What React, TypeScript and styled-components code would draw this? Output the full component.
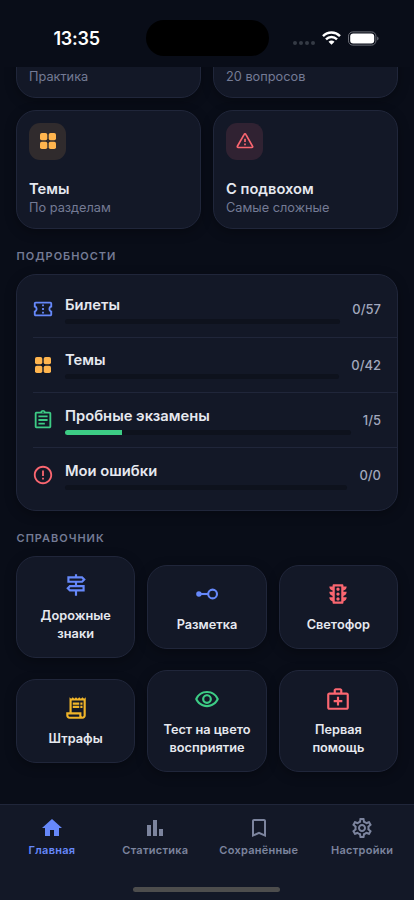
import React from "react";
import styled, { createGlobalStyle } from "styled-components";
import {
  MdOutlineConfirmationNumber,
  MdOutlineAssignment,
  MdErrorOutline,
  MdOutlineSignpost,
  MdOutlineTraffic,
  MdOutlineReceiptLong,
  MdOutlineRemoveRedEye,
  MdOutlineMedicalServices,
  MdHome,
  MdBarChart,
  MdBookmarkBorder,
  MdOutlineSettings,
} from "react-icons/md";

const c = {
  bg: "#090d18",
  card: "#131827",
  line: "#20263a",
  text: "#e6e8ef",
  muted: "#747b95",
  blue: "#6688fa",
  orange: "#ffb54e",
  amber: "#f0b429",
  green: "#3dcc85",
  red: "#fa6670",
};

const Global = createGlobalStyle`
  * { box-sizing: border-box; }
  body { margin: 0; background: ${c.bg}; font-family: Inter, "Noto Sans", sans-serif; color: ${c.text}; }
  svg { display: block; flex: none; }
`;

const Screen = styled.div`
  width: 414px;
  height: 900px;
  display: flex;
  flex-direction: column;
  overflow: hidden;
  background: ${c.bg};
`;

const StatusBar = styled.header`
  height: 67px;
  flex: none;
  display: grid;
  grid-template-columns: 145.5px 123px 1fr;
  align-items: center;
  padding-top: 9px;
`;

const Time = styled.div`
  padding: 2px 0 0 53.5px;
  font-size: 18px;
  line-height: 20px;
  font-weight: 600;
  color: #fff;
  letter-spacing: -0.25px;
`;

const Island = styled.div`
  height: 36px;
  border-radius: 18px;
  background: #000;
`;

const Signals = styled.div`
  display: flex;
  align-items: center;
  gap: 7px;
  padding-left: 24.5px;
`;

const Body = styled.main`
  flex: 1;
  min-height: 0;
  overflow: hidden;
  padding: 0 16px;
`;

const Modes = styled.section`
  display: grid;
  grid-template-columns: 1fr 1fr;
  gap: 12px;
  margin-top: -88.5px;
`;

const ModeCard = styled.article`
  height: 119px;
  padding: 12px;
  display: flex;
  flex-direction: column;
  background: ${c.card};
  border: 1px solid ${c.line};
  border-radius: 20px;
  box-shadow: 0 3px 12px rgba(0, 0, 0, 0.3);
`;

const Badge = styled.div<{ $bg: string; $color?: string }>`
  width: 37px;
  height: 37px;
  flex: none;
  border-radius: 11px;
  background: ${(p) => p.$bg};
  color: ${(p) => p.$color ?? "inherit"};
  display: grid;
  place-items: center;
  margin-bottom: 20px;
`;

const ModeTitle = styled.div`
  font-size: 14.7px;
  line-height: 19px;
  font-weight: 600;
`;

const ModeNote = styled.div`
  font-size: 12.75px;
  line-height: 18px;
  color: ${c.muted};
`;

const SectionLabel = styled.h2`
  margin: 19px 0 0;
  padding-left: 0.6px;
  height: 26px;
  line-height: 16px;
  font-size: 11px;
  font-weight: 600;
  letter-spacing: 0.98px;
  color: ${c.muted};
`;

const Details = styled.section`
  height: 237.2px;
  padding: 7.3px 0 8px 16px;
  background: ${c.card};
  border: 1px solid ${c.line};
  border-radius: 20px;
  box-shadow: 0 3px 12px rgba(0, 0, 0, 0.3);
`;

const DetailRow = styled.div`
  height: 55.1px;
  padding-right: 16px;
  display: flex;
  align-items: center;
  & + & {
    border-top: 1px solid ${c.line};
  }
`;

const DetailIcon = styled.div<{ $color: string }>`
  width: 20px;
  display: flex;
  justify-content: center;
  color: ${(p) => p.$color};
  margin-right: 12px;
`;

const DetailMain = styled.div`
  flex: 1;
  margin-right: 12px;
`;

const DetailTitle = styled.div`
  padding-top: 1px;
  font-size: 14.75px;
  line-height: 19px;
  font-weight: 600;
  margin-bottom: 4px;
`;

const Track = styled.div`
  height: 5px;
  border-radius: 3px;
  overflow: hidden;
  background: #0e121d;
`;

const Fill = styled.div`
  height: 100%;
  background: ${c.green};
`;

const Count = styled.div`
  font-size: 13px;
  font-weight: 500;
  color: #a2a8bd;
`;

const Guide = styled.section`
  display: grid;
  grid-template-columns: repeat(3, 1fr);
  grid-auto-rows: 102px;
  gap: 12px;
  align-items: center;
`;

const GuideCard = styled.article`
  padding: 15px 0 14px;
  display: flex;
  flex-direction: column;
  align-items: center;
  background: ${c.card};
  border: 1px solid ${c.line};
  border-radius: 20px;
  box-shadow: 0 3px 12px rgba(0, 0, 0, 0.3);
`;

const GuideIcon = styled.div<{ $color: string }>`
  color: ${(p) => p.$color};
  height: 26px;
  margin-bottom: 9px;
  display: grid;
  place-items: center;
`;

const GuideText = styled.div`
  font-size: 12.75px;
  line-height: 18px;
  font-weight: 600;
  text-align: center;
  white-space: pre-line;
`;

const Nav = styled.nav`
  height: 96px;
  flex: none;
  background: ${c.card};
  border-top: 1px solid ${c.line};
  display: flex;
  flex-direction: column;
`;

const Tabs = styled.div`
  display: grid;
  grid-template-columns: repeat(4, 103.4px);
  padding: 11px 0 0 0.3px;
  height: 82px;
`;

const Tab = styled.div<{ $active?: boolean }>`
  display: flex;
  flex-direction: column;
  align-items: center;
  gap: 2px;
  font-size: 11px;
  line-height: 17px;
  font-weight: 600;
  letter-spacing: 0.27px;
  color: ${(p) => (p.$active ? c.blue : "#7c849e")};
`;

const HomeBar = styled.div`
  width: 147px;
  height: 5px;
  border-radius: 3px;
  background: #4d4d4d;
  margin-left: 133px;
`;

const Tiles = () => (
  <svg width="20" height="20" viewBox="0 0 20 20" fill="currentColor">
    <rect x="2" y="2" width="7.3" height="7.3" rx="1.8" />
    <rect x="10.7" y="2" width="7.3" height="7.3" rx="1.8" />
    <rect x="2" y="10.7" width="7.3" height="7.3" rx="1.8" />
    <rect x="10.7" y="10.7" width="7.3" height="7.3" rx="1.8" />
  </svg>
);

const Warning = () => (
  <svg width="20" height="20" viewBox="0 0 20 20" fill="none" stroke="currentColor" strokeWidth="1.7" strokeLinejoin="round">
    <path d="M9.2 3.3a.9.9 0 0 1 1.6 0l6.8 12a.8.8 0 0 1-.7 1.2H3.1a.8.8 0 0 1-.7-1.2z" />
    <path d="M10 7.8v3.2M10 12.6v1.6" />
  </svg>
);

const Marking = () => (
  <svg width="24" height="24" viewBox="0 0 24 24" fill="none" stroke="currentColor" strokeWidth="2.1">
    <circle cx="17.6" cy="12" r="4.4" />
    <path d="M4 12h9.3" />
    <circle cx="3.9" cy="12" r="2.7" fill="currentColor" stroke="none" />
  </svg>
);

const Cell = () => (
  <svg width="22" height="18" viewBox="0 0 22 18" fill="#353a45">
    <circle cx="2" cy="14" r="2" />
    <circle cx="8" cy="14" r="2" />
    <circle cx="14" cy="14" r="2" />
    <circle cx="20" cy="14" r="2" />
  </svg>
);

const Wifi = () => (
  <svg width="19" height="14" viewBox="0 0 19 14" fill="none" stroke="#fff" strokeWidth="2.5">
    <path d="M1 5.1C5.8.4 13.2.4 18 5.1M4 8.3c3.1-3 7.9-3 11 0" />
    <path d="M6.5 10.8c1.8-1.6 4.2-1.6 6 0l-3 3z" fill="#fff" stroke="none" />
  </svg>
);

const Battery = () => (
  <svg width="31" height="15" viewBox="0 0 31 15">
    <rect x=".5" y=".9" width="27.4" height="13.2" rx="4.2" fill="none" stroke="#6b6e77" />
    <rect x="2.2" y="2.5" width="24" height="10" rx="3" fill="#fff" />
    <path d="M29.2 5.4c1.8.7 1.8 3.5 0 4.2z" fill="#6b6e77" />
  </svg>
);

const details = [
  { icon: <MdOutlineConfirmationNumber size={22} />, color: c.blue, title: "Билеты", count: "0/57", value: 0 },
  { icon: <Tiles />, color: c.orange, title: "Темы", count: "0/42", value: 0 },
  { icon: <MdOutlineAssignment size={22} />, color: c.green, title: "Пробные экзамены", count: "1/5", value: 20 },
  { icon: <MdErrorOutline size={22} />, color: c.red, title: "Мои ошибки", count: "0/0", value: 0 },
];

const guide = [
  { icon: <MdOutlineSignpost size={26} />, color: c.blue, text: "Дорожные\nзнаки" },
  { icon: <Marking />, color: c.blue, text: "Разметка" },
  { icon: <MdOutlineTraffic size={26} />, color: c.red, text: "Светофор" },
  { icon: <MdOutlineReceiptLong size={26} />, color: c.amber, text: "Штрафы" },
  { icon: <MdOutlineRemoveRedEye size={26} />, color: c.green, text: "Тест на цвето\nвосприятие" },
  { icon: <MdOutlineMedicalServices size={26} />, color: c.red, text: "Первая\nпомощь" },
];

export default function App() {
  return (
    <>
      <Global />
      <Screen>
        <StatusBar>
          <Time>13:35</Time>
          <Island />
          <Signals>
            <Cell />
            <Wifi />
            <Battery />
          </Signals>
        </StatusBar>
        <Body>
          <Modes>
            <ModeCard>
              <Badge $bg="transparent" />
              <ModeTitle>&nbsp;</ModeTitle>
              <ModeNote>Практика</ModeNote>
            </ModeCard>
            <ModeCard>
              <Badge $bg="transparent" />
              <ModeTitle>&nbsp;</ModeTitle>
              <ModeNote>20 вопросов</ModeNote>
            </ModeCard>
            <ModeCard>
              <Badge $bg="#302b2d" $color={c.orange}>
                <Tiles />
              </Badge>
              <ModeTitle>Темы</ModeTitle>
              <ModeNote>По разделам</ModeNote>
            </ModeCard>
            <ModeCard>
              <Badge $bg="#302232" $color={c.red}>
                <Warning />
              </Badge>
              <ModeTitle>С подвохом</ModeTitle>
              <ModeNote>Самые сложные</ModeNote>
            </ModeCard>
          </Modes>
          <SectionLabel>ПОДРОБНОСТИ</SectionLabel>
          <Details>
            {details.map((d) => (
              <DetailRow key={d.title}>
                <DetailIcon $color={d.color}>{d.icon}</DetailIcon>
                <DetailMain>
                  <DetailTitle>{d.title}</DetailTitle>
                  <Track>
                    <Fill style={{ width: `${d.value}%` }} />
                  </Track>
                </DetailMain>
                <Count>{d.count}</Count>
              </DetailRow>
            ))}
          </Details>
          <SectionLabel>СПРАВОЧНИК</SectionLabel>
          <Guide>
            {guide.map((g) => (
              <GuideCard key={g.text}>
                <GuideIcon $color={g.color}>{g.icon}</GuideIcon>
                <GuideText>{g.text}</GuideText>
              </GuideCard>
            ))}
          </Guide>
        </Body>
        <Nav>
          <Tabs>
            <Tab $active>
              <MdHome size={24} />
              Главная
            </Tab>
            <Tab>
              <MdBarChart size={24} />
              Статистика
            </Tab>
            <Tab>
              <MdBookmarkBorder size={24} />
              Сохранённые
            </Tab>
            <Tab>
              <MdOutlineSettings size={24} />
              Настройки
            </Tab>
          </Tabs>
          <HomeBar />
        </Nav>
      </Screen>
    </>
  );
}
